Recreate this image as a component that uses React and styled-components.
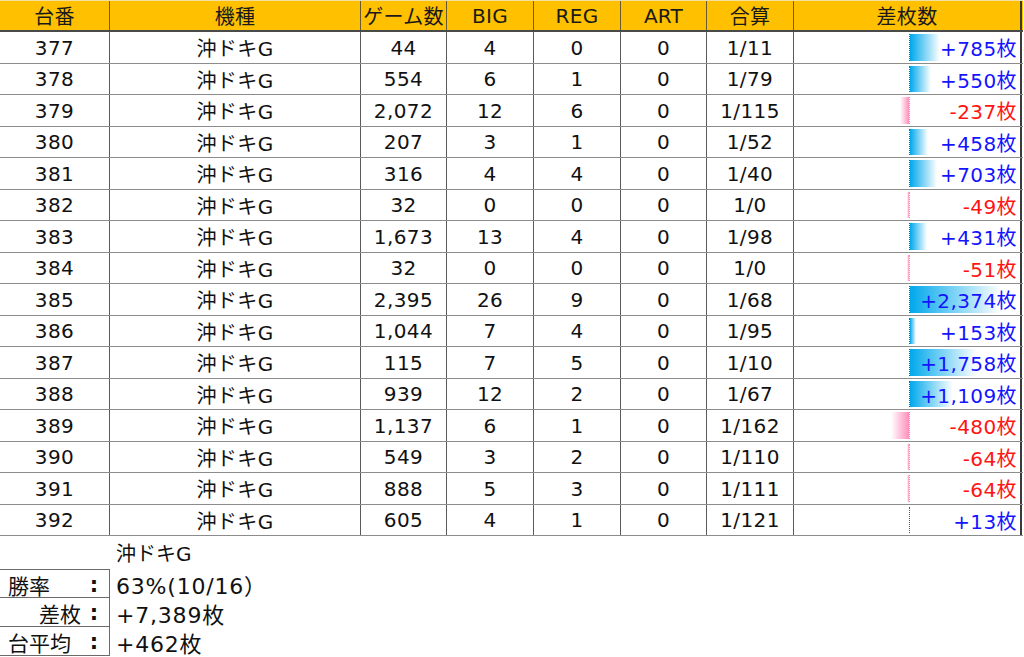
import React from "react";
import styled, { createGlobalStyle } from "styled-components";

const GlobalStyle = createGlobalStyle`
  html, body {
    margin: 0;
    padding: 0;
    background: #ffffff;
  }
  body {
    font-family: "DejaVu Sans", "Noto Sans CJK JP", sans-serif;
    color: #111;
  }
`;

const COLS = "110px 251px 86px 87px 87px 86px 87px 228px";
const MAX_DIFF = 2374;
const BAR_SPAN = 91;

const rows = [
  [377, 44, 4, 0, 0, "1/11", 785],
  [378, 554, 6, 1, 0, "1/79", 550],
  [379, 2072, 12, 6, 0, "1/115", -237],
  [380, 207, 3, 1, 0, "1/52", 458],
  [381, 316, 4, 4, 0, "1/40", 703],
  [382, 32, 0, 0, 0, "1/0", -49],
  [383, 1673, 13, 4, 0, "1/98", 431],
  [384, 32, 0, 0, 0, "1/0", -51],
  [385, 2395, 26, 9, 0, "1/68", 2374],
  [386, 1044, 7, 4, 0, "1/95", 153],
  [387, 115, 7, 5, 0, "1/10", 1758],
  [388, 939, 12, 2, 0, "1/67", 1109],
  [389, 1137, 6, 1, 0, "1/162", -480],
  [390, 549, 3, 2, 0, "1/110", -64],
  [391, 888, 5, 3, 0, "1/111", -64],
  [392, 605, 4, 1, 0, "1/121", 13],
];

const Page = styled.div`
  width: 1024px;
  height: 657px;
  overflow: hidden;
`;

const Sheet = styled.div`
  width: 1023px;
`;

const HeaderRow = styled.div`
  display: grid;
  grid-template-columns: ${COLS};
  height: 32px;
  background: #ffc000;
  border-top: 1px solid #f3dfa0;
  border-bottom: 2px solid #4a4a4a;
  box-sizing: border-box;
`;

const HeadCell = styled.div`
  display: flex;
  align-items: center;
  justify-content: center;
  font-size: 20px;
  letter-spacing: 0.3px;
  color: #1a1a1a;
  border-right: 1px solid #6a5a30;
  &:last-child {
    border-right: 2px solid #3a3a3a;
  }
`;

const Row = styled.div`
  display: grid;
  grid-template-columns: ${COLS};
  height: 31.5px;
  border-bottom: 1px solid #8c8c8c;
  box-sizing: border-box;
`;

const Cell = styled.div`
  display: flex;
  align-items: center;
  justify-content: center;
  font-size: 20px;
  letter-spacing: 0.4px;
  color: #111;
  border-right: 1px solid #5a5a5a;
  padding-top: 1px;
`;

const DiffCell = styled.div`
  display: grid;
  border-right: 2px solid #3a3a3a;
`;

const BarTrack = styled.div`
  grid-area: 1 / 1;
  display: flex;
  padding: 2px 0 2px;
`;

const NegHalf = styled.div`
  width: 115px;
  display: flex;
  justify-content: flex-end;
`;

const PosHalf = styled.div`
  flex: 1;
  display: flex;
  border-left: 1px dotted ${(p) => (p.$neg ? "#e090b0" : "#3a5a80")};
`;

const Bar = styled.div`
  height: 100%;
  background: ${(p) =>
    p.$neg
      ? "linear-gradient(to right, #ffffff, #ff8fbb)"
      : "linear-gradient(to right, #00a8ec, #ffffff)"};
`;

const Value = styled.div`
  grid-area: 1 / 1;
  justify-self: end;
  align-self: center;
  padding: 1px 3px 0 0;
  font-size: 20px;
  letter-spacing: 0.4px;
  color: ${(p) => (p.$neg ? "#ff1414" : "#1414ff")};
  position: relative;
`;

const Caption = styled.div`
  height: 33px;
  display: flex;
  align-items: center;
  padding-left: 116px;
  font-size: 20px;
  color: #111;
`;

const Summary = styled.div`
  display: grid;
  grid-template-columns: 110px 1fr;
  grid-auto-rows: 29px;
`;

const Label = styled.div`
  display: grid;
  grid-template-columns: 1fr 18px;
  align-items: center;
  padding: 0 6px 0 8px;
  font-size: 21px;
  color: #111;
  border: 1px solid #6a6a6a;
  border-top: ${(p) => (p.$first ? "1px solid #6a6a6a" : "none")};
  border-left: none;
  white-space: nowrap;

  & > span:first-child {
    justify-self: ${(p) => (p.$right ? "end" : "start")};
    padding-right: ${(p) => (p.$right ? "4px" : "0")};
  }
  & > span:last-child {
    justify-self: center;
    font-weight: bold;
  }
`;

const SumValue = styled.div`
  display: flex;
  align-items: center;
  padding-left: 6px;
  font-size: 22px;
  letter-spacing: 0.8px;
  color: #111;
  white-space: nowrap;
`;

const fmt = (n) => n.toLocaleString("en-US");

const DiffBox = ({ diff }) => {
  const neg = diff < 0;
  const w = (Math.abs(diff) / MAX_DIFF) * BAR_SPAN;
  return (
    <DiffCell>
      <BarTrack>
        <NegHalf>{neg && <Bar $neg style={{ width: w }} />}</NegHalf>
        <PosHalf $neg={neg}>{!neg && <Bar style={{ width: w }} />}</PosHalf>
      </BarTrack>
      <Value $neg={neg}>
        {neg ? "-" : "+"}
        {fmt(Math.abs(diff))}枚
      </Value>
    </DiffCell>
  );
};

const headers = ["台番", "機種", "ゲーム数", "BIG", "REG", "ART", "合算", "差枚数"];

export default function App() {
  return (
    <Page>
      <GlobalStyle />
      <Sheet>
        <HeaderRow>
          {headers.map((h) => (
            <HeadCell key={h}>{h}</HeadCell>
          ))}
        </HeaderRow>
        {rows.map(([no, games, big, reg, art, total, diff]) => (
          <Row key={no}>
            <Cell>{no}</Cell>
            <Cell>沖ドキG</Cell>
            <Cell>{fmt(games)}</Cell>
            <Cell>{big}</Cell>
            <Cell>{reg}</Cell>
            <Cell>{art}</Cell>
            <Cell>{total}</Cell>
            <DiffBox diff={diff} />
          </Row>
        ))}
      </Sheet>
      <Caption>沖ドキG</Caption>
      <Summary>
        <Label $first>
          <span>勝率</span>
          <span>:</span>
        </Label>
        <SumValue>63%(10/16）</SumValue>
        <Label $right>
          <span>差枚</span>
          <span>:</span>
        </Label>
        <SumValue>+7,389枚</SumValue>
        <Label>
          <span>台平均</span>
          <span>:</span>
        </Label>
        <SumValue>+462枚</SumValue>
      </Summary>
    </Page>
  );
}
